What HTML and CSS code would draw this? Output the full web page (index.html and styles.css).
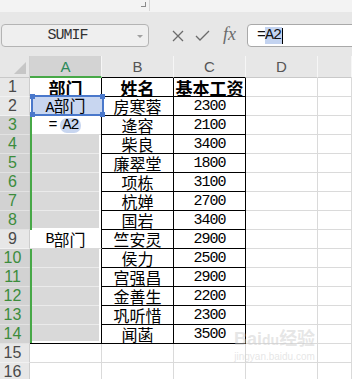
FILE: index.html
```html
<!DOCTYPE html>
<html lang="zh-CN">
<head>
    <meta charset="UTF-8">
    <meta name="viewport" content="width=device-width, initial-scale=1.0">
    <title>SUMIF</title>
    <link rel="stylesheet" href="styles.css">
</head>
<body>
    <div class="app">
        <div class="ribbon">
            <span class="launcher"></span>
            <span class="ribbon-sep"></span>
        </div>

        <div class="formula-bar">
            <div class="name-box">
                <span class="name">SUMIF</span>
                <span class="caret"></span>
            </div>
            <div class="fx-icons">
                <svg width="12" height="12" viewBox="0 0 12 12"><path d="M1 1 L11 11 M11 1 L1 11" stroke="#6b6b6b" stroke-width="1.3" fill="none"/></svg>
                <svg width="15" height="11" viewBox="0 0 15 11"><path d="M1 6 L5 10 L14 1" stroke="#6b6b6b" stroke-width="1.3" fill="none"/></svg>
                <span class="fx">fx</span>
            </div>
            <div class="formula-input">=<span class="ref">A2</span><span class="cursor"></span></div>
        </div>

        <div class="sheet">
            <!-- column headers -->
            <div class="ch corner"><span class="tri"></span></div>
            <div class="ch ch-a">A</div>
            <div class="ch ch-b">B</div>
            <div class="ch ch-b">C</div>
            <div class="ch">D</div>
            <div class="ch"></div>

            <!-- row 1 -->
            <div class="rh">1</div>
            <div class="cell col-a hd">部门</div>
            <div class="cell tb hd">姓名</div>
            <div class="cell tb hd">基本工资</div>
            <div class="cell"></div>
            <div class="cell"></div>

            <!-- row 2 -->
            <div class="rh">2</div>
            <div class="cell col-a ref-cell">
                <div class="ref-box">
                    <span class="hdl tl"></span><span class="hdl tr"></span>
                    <span class="hdl bl"></span><span class="hdl br"></span>
                </div>
                <span class="txt"><span class="lat">A</span>部门</span>
            </div>
            <div class="cell tb">房寒蓉</div>
            <div class="cell tb num">2300</div>
            <div class="cell"></div>
            <div class="cell"></div>

            <!-- row 3 -->
            <div class="rh sel">3</div>
            <div class="cell col-a act"><span class="lat">=</span><span class="pill lat">A2</span></div>
            <div class="cell tb">逄容</div>
            <div class="cell tb num">2100</div>
            <div class="cell"></div>
            <div class="cell"></div>

            <div class="rh sel">4</div>
            <div class="cell col-a pick"></div>
            <div class="cell tb">柴良</div>
            <div class="cell tb num">3400</div>
            <div class="cell"></div>
            <div class="cell"></div>

            <div class="rh sel">5</div>
            <div class="cell col-a pick"></div>
            <div class="cell tb">廉翠堂</div>
            <div class="cell tb num">1800</div>
            <div class="cell"></div>
            <div class="cell"></div>

            <div class="rh sel">6</div>
            <div class="cell col-a pick"></div>
            <div class="cell tb">项栋</div>
            <div class="cell tb num">3100</div>
            <div class="cell"></div>
            <div class="cell"></div>

            <div class="rh sel">7</div>
            <div class="cell col-a pick"></div>
            <div class="cell tb">杭婵</div>
            <div class="cell tb num">2700</div>
            <div class="cell"></div>
            <div class="cell"></div>

            <div class="rh sel">8</div>
            <div class="cell col-a pick pick-end"></div>
            <div class="cell tb">国岩</div>
            <div class="cell tb num">3400</div>
            <div class="cell"></div>
            <div class="cell"></div>

            <div class="rh">9</div>
            <div class="cell col-a"><span class="lat">B</span>部门</div>
            <div class="cell tb">竺安灵</div>
            <div class="cell tb num">2900</div>
            <div class="cell"></div>
            <div class="cell"></div>

            <div class="rh sel">10</div>
            <div class="cell col-a pick"></div>
            <div class="cell tb">侯力</div>
            <div class="cell tb num">2500</div>
            <div class="cell"></div>
            <div class="cell"></div>

            <div class="rh sel">11</div>
            <div class="cell col-a pick"></div>
            <div class="cell tb">宫强昌</div>
            <div class="cell tb num">2900</div>
            <div class="cell"></div>
            <div class="cell"></div>

            <div class="rh sel">12</div>
            <div class="cell col-a pick"></div>
            <div class="cell tb">金善生</div>
            <div class="cell tb num">2200</div>
            <div class="cell"></div>
            <div class="cell"></div>

            <div class="rh sel">13</div>
            <div class="cell col-a pick"></div>
            <div class="cell tb">巩听惜</div>
            <div class="cell tb num">2300</div>
            <div class="cell"></div>
            <div class="cell"></div>

            <div class="rh sel">14</div>
            <div class="cell col-a pick pick-last"></div>
            <div class="cell tb">闻菡</div>
            <div class="cell tb num">3500</div>
            <div class="cell"></div>
            <div class="cell"></div>

            <div class="rh">15</div>
            <div class="cell"></div>
            <div class="cell"></div>
            <div class="cell"></div>
            <div class="cell"></div>
            <div class="cell"></div>

            <div class="rh">16</div>
            <div class="cell"></div>
            <div class="cell"></div>
            <div class="cell"></div>
            <div class="cell"></div>
            <div class="cell"></div>

            <div class="watermark">
                <div class="wm-logo">Bai<span class="wm-du">du</span>经验</div>
                <div class="wm-url">jingyan.baidu.com</div>
            </div>
        </div>
    </div>
</body>
</html>
```

FILE: styles.css
```css
body {
    margin: 0;
    font-family: "Liberation Sans", "Noto Sans CJK SC", sans-serif;
    background: #fff;
}

.app {
    width: 352px;
    height: 379px;
    overflow: hidden;
    position: relative;
}

/* ribbon bottom edge */
.ribbon {
    height: 12px;
    background: #f3f3f3;
    display: flex;
    align-items: flex-start;
    padding-left: 141px;
    box-sizing: border-box;
}

.launcher {
    width: 4px;
    height: 4px;
    margin-top: 2px;
    border-right: 1px solid #8a8a8a;
    border-bottom: 1px solid #8a8a8a;
}

.ribbon-sep {
    width: 1px;
    height: 11px;
    margin-left: 3px;
    background: #d6d6d6;
}

/* formula bar */
.formula-bar {
    height: 44px;
    padding: 12px 0 9px 1px;
    box-sizing: border-box;
    background: #e7e7e7;
    display: flex;
    align-items: center;
}

.name-box {
    width: 148px;
    height: 23px;
    box-sizing: border-box;
    border: 1px solid #b4b4b4;
    border-radius: 4px;
    background: #efefef;
    display: flex;
    align-items: center;
}

.name {
    flex: 1;
    text-align: center;
    font-family: "Liberation Mono", monospace;
    font-size: 15px;
    letter-spacing: -1px;
    color: #333;
}

.caret {
    width: 0;
    height: 0;
    margin: 2px 5px 0 4px;
    border-left: 3px solid transparent;
    border-right: 3px solid transparent;
    border-top: 3px solid #a0a0a0;
}

.fx-icons {
    width: 98px;
    height: 23px;
    box-sizing: border-box;
    padding-left: 23px;
    display: flex;
    align-items: center;
    gap: 11px;
}

.fx {
    font-family: "Liberation Serif", serif;
    font-style: italic;
    font-size: 18px;
    color: #6b6b6b;
    margin-left: 2px;
    margin-top: -3px;
}

.formula-input {
    flex: 1;
    height: 23px;
    margin-right: -6px;
    box-sizing: border-box;
    border: 1px solid #a9a9a9;
    border-radius: 4px;
    background: #fff;
    padding-left: 9px;
    display: flex;
    align-items: center;
    font-family: "Liberation Mono", monospace;
    font-size: 15px;
    letter-spacing: -1px;
    color: #111;
}

.ref {
    background: #c3d3f0;
    padding-right: 1px;
}

.cursor {
    width: 1px;
    height: 16px;
    background: #000;
}

/* sheet grid */
.sheet {
    display: grid;
    grid-template-columns: 30px 72px 72px 72px 72px 34px;
    grid-template-rows: 22px;
    grid-auto-rows: 19px;
    position: relative;
    background: #fff;
}

.ch {
    background: #e7e7e7;
    border-right: 1px solid #f6f6f6;
    border-bottom: 1px solid #c9c9c9;
    box-sizing: border-box;
    display: flex;
    align-items: center;
    justify-content: center;
    font-size: 15px;
    color: #555;
}

.corner {
    position: relative;
    border-right-color: #d0d0d0;
}

.tri {
    position: absolute;
    right: 3px;
    bottom: 3px;
    width: 0;
    height: 0;
    border-left: 12px solid transparent;
    border-bottom: 12px solid #c6c6c6;
}

.ch-a {
    background: #d3d3d3;
    color: #2b8a5a;
    border-bottom: 2px solid #47a847;
}

.ch-b {
    border-bottom-color: #000;
}

.rh {
    background: #e7e7e7;
    border-right: 1px solid #cdcdcd;
    border-bottom: 1px solid #f1f1f1;
    box-sizing: border-box;
    display: flex;
    align-items: center;
    justify-content: center;
    padding-right: 4px;
    font-size: 16px;
    color: #4a4a4a;
}

.rh.sel {
    background: #d2d2d2;
    color: #3c8c3c;
    border-bottom-color: #e2e2e2;
}

.cell {
    border-right: 1px solid #dadada;
    border-bottom: 1px solid #dadada;
    box-sizing: border-box;
    display: flex;
    align-items: center;
    justify-content: center;
    font-family: "Noto Sans CJK SC", sans-serif;
    font-size: 16px;
    line-height: 1;
    color: #000;
    white-space: nowrap;
}

.lat {
    font-family: "Liberation Mono", monospace;
    font-size: 15px;
    letter-spacing: -1px;
}

.num {
    font-family: "Liberation Mono", monospace;
    font-size: 15px;
    letter-spacing: -1px;
}

.tb {
    border-right-color: #000;
    border-bottom-color: #000;
}

.col-a {
    border-right-color: #000;
}

.hd {
    font-weight: bold;
    font-size: 17px;
}

/* A2 reference highlight */
.ref-cell {
    position: relative;
}

.ref-box {
    position: absolute;
    left: 1px;
    top: -2px;
    right: -3px;
    bottom: -1px;
    border: 2px solid #4a78cb;
    background: #c8d6f0;
}

.hdl {
    position: absolute;
    width: 5px;
    height: 5px;
    background: #4a78cb;
}

.tl { left: -3px; top: -3px; }
.tr { right: -3px; top: -3px; }
.bl { left: -3px; bottom: -3px; }
.br { right: -3px; bottom: -3px; }

.txt {
    position: relative;
}

/* selection in column A */
.act {
    border-bottom: none;
    box-shadow: inset 2px 0 0 #47a847, inset 0 -1px 0 #dadada;
    padding-right: 2px;
}

.pill {
    display: inline-block;
    height: 15px;
    line-height: 15px;
    background: #c8d6f0;
    border-radius: 7px;
    padding: 0 2px 0 3px;
    margin-left: 3px;
}

.pick {
    border-bottom: none;
    background: #d9d9d9;
    box-shadow: inset 2px 0 0 #47a847, inset -2px 0 0 #fff, inset 0 -1px 0 #ebebeb;
}

.pick-end {
    box-shadow: inset 2px 0 0 #47a847, inset -2px 0 0 #fff, inset 0 -2px 0 #fff;
}

.pick-last {
    border-bottom: 1px solid #000;
    box-shadow: inset 2px 0 0 #47a847, inset -2px 0 0 #fff, inset 0 -2px 0 #fff;
}

/* faint watermark */
.watermark {
    position: absolute;
    left: 234px;
    top: 272px;
    text-align: center;
    white-space: nowrap;
    color: rgba(205, 205, 205, 0.5);
    pointer-events: none;
}

.wm-logo {
    font-family: "Liberation Sans", "Noto Sans CJK SC", sans-serif;
    font-weight: bold;
    font-size: 18px;
    line-height: 22px;
}

.wm-du {
    font-size: 14px;
}

.wm-url {
    font-size: 10px;
    line-height: 12px;
}
```
